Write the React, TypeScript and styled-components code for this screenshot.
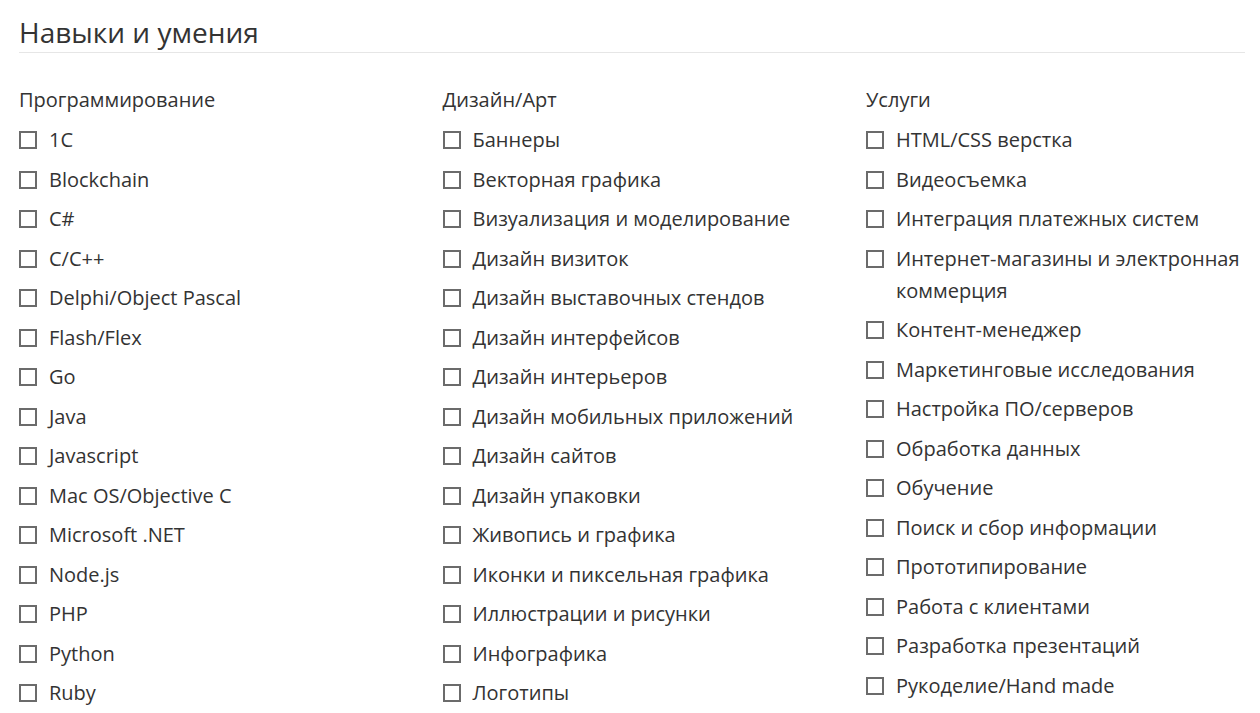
import React from "react";
import styled, { createGlobalStyle } from "styled-components";

const Global = createGlobalStyle`
  html, body { margin: 0; padding: 0; background: #fff; }
  body { font-family: "Open Sans", "Noto Sans", sans-serif; color: #333; }
`;

const Page = styled.div`
  padding: 14px 15px 0 19px;
`;

const Title = styled.h2`
  margin: 0;
  font-size: 28px;
  font-weight: 400;
  line-height: 36px;
  color: #333;
  padding-bottom: 2px;
  border-bottom: 1px solid #e6e6e6;
`;

const Columns = styled.div`
  display: grid;
  grid-template-columns: repeat(3, 380px);
  column-gap: 43.5px;
  margin-top: 33px;
`;

const Column = styled.div`
  display: flex;
  flex-direction: column;
`;

const Heading = styled.div`
  font-size: 20px;
  line-height: 28px;
  margin-bottom: 10px;
`;

const List = styled.div`
  display: flex;
  flex-direction: column;
  gap: 7.5px;
`;

const Item = styled.label`
  display: flex;
  align-items: flex-start;
  gap: 12px;
  font-size: 20px;
  line-height: 32px;
`;

const Box = styled.span`
  flex: none;
  width: 14px;
  height: 14px;
  border: 2px solid #6b6b6b;
  margin-top: 7px;
`;

const data: [string, string[]][] = [
  [
    "Программирование",
    ["1C", "Blockchain", "C#", "C/C++", "Delphi/Object Pascal", "Flash/Flex", "Go", "Java", "Javascript", "Mac OS/Objective C", "Microsoft .NET", "Node.js", "PHP", "Python", "Ruby"],
  ],
  [
    "Дизайн/Арт",
    ["Баннеры", "Векторная графика", "Визуализация и моделирование", "Дизайн визиток", "Дизайн выставочных стендов", "Дизайн интерфейсов", "Дизайн интерьеров", "Дизайн мобильных приложений", "Дизайн сайтов", "Дизайн упаковки", "Живопись и графика", "Иконки и пиксельная графика", "Иллюстрации и рисунки", "Инфографика", "Логотипы"],
  ],
  [
    "Услуги",
    ["HTML/CSS верстка", "Видеосъемка", "Интеграция платежных систем", "Интернет-магазины и электронная коммерция", "Контент-менеджер", "Маркетинговые исследования", "Настройка ПО/серверов", "Обработка данных", "Обучение", "Поиск и сбор информации", "Прототипирование", "Работа с клиентами", "Разработка презентаций", "Рукоделие/Hand made"],
  ],
];

export default function App() {
  return (
    <Page>
      <Global />
      <Title>Навыки и умения</Title>
      <Columns>
        {data.map(([h, items]) => (
          <Column key={h}>
            <Heading>{h}</Heading>
            <List>
              {items.map((t) => (
                <Item key={t}>
                  <Box />
                  <span>{t}</span>
                </Item>
              ))}
            </List>
          </Column>
        ))}
      </Columns>
    </Page>
  );
}
